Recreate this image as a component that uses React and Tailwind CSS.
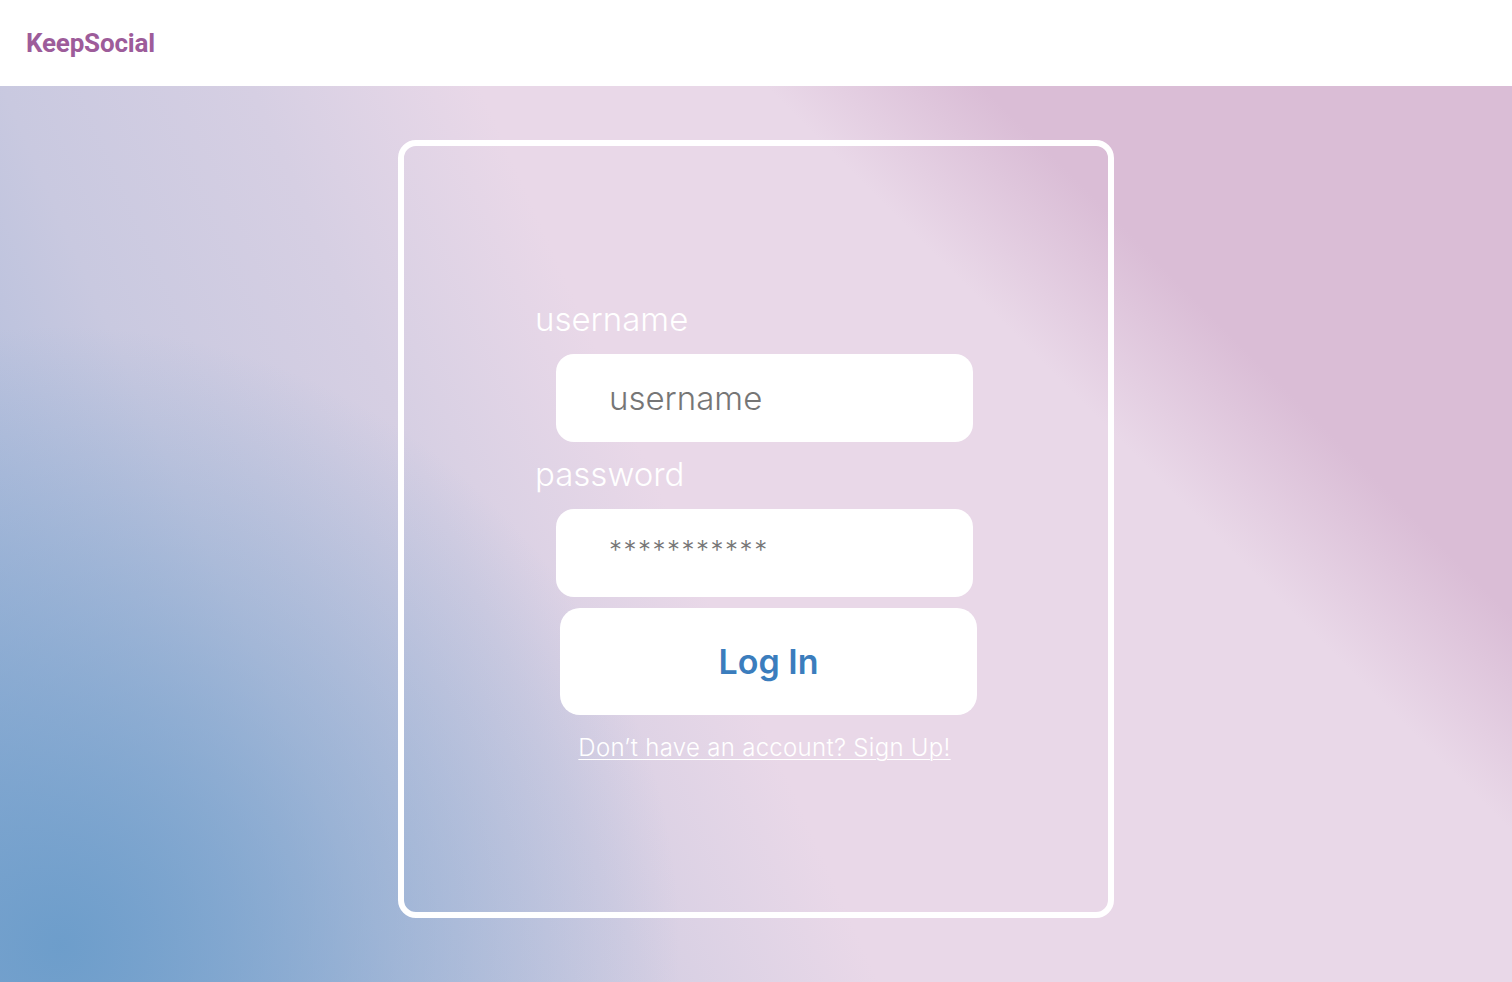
import { useState } from 'react';

function Header() {
  return (
    <header className="h-[86px] bg-white flex items-center pl-[26px]">
      <span className="font-['Roboto',sans-serif] font-bold text-[26px] text-[#9d5c9a] leading-none tracking-[-0.2px]">
        KeepSocial
      </span>
    </header>
  );
}

function LoginCard() {
  const [username, setUsername] = useState('');
  const [password, setPassword] = useState('');

  return (
    <div className="w-[716px] h-[778px] border-[6px] border-white rounded-[18px] flex items-center justify-center">
      <form className="w-[442px] flex flex-col mt-[7px]" onSubmit={e => e.preventDefault()}>
        <label className="text-white text-[33px] font-light leading-[40px] h-[40px]">username</label>
        <input
          value={username}
          onChange={e => setUsername(e.target.value)}
          placeholder="username"
          className="mt-[15px] ml-[21px] w-[417px] h-[88px] rounded-[18px] bg-white pl-[53px] text-[33px] font-light text-[#555] placeholder:text-[#767676] outline-none"
        />
        <label className="mt-[12px] text-white text-[33px] font-light leading-[40px] h-[40px]">password</label>
        <input
          type="password"
          value={password}
          onChange={e => setPassword(e.target.value)}
          placeholder="***********"
          className="mt-[15px] ml-[21px] w-[417px] h-[88px] rounded-[18px] bg-white pl-[53px] pb-[8px] text-[26px] tracking-[1.5px] font-light text-[#555] placeholder:text-[#767676] outline-none"
        />
        <button
          type="submit"
          className="mt-[11px] ml-[25px] w-[417px] h-[107px] rounded-[20px] bg-white text-[#3b7dbd] text-[34px] font-semibold"
        >
          Log In
        </button>
        <div className="ml-[21px] w-[417px] mt-[15px] text-center">
          <a href="#" className="text-white text-[24px] tracking-[0.3px] font-light underline underline-offset-[3px] decoration-1">
            Don’t have an account? Sign Up!
          </a>
        </div>
      </form>
    </div>
  );
}

export default function App() {
  return (
    <div className="min-h-screen font-['Inter',sans-serif] flex flex-col">
      <Header />
      <main
        className="h-[896px] flex justify-center pt-[54px] bg-[linear-gradient(45deg,rgba(218,190,214,0)_0%,rgba(218,190,214,0)_69%,#dabdd6_78%,#dabdd6_100%),radial-gradient(circle_620px_at_60px_860px,rgba(106,156,202,0.95)_0%,rgba(106,156,202,0)_100%),linear-gradient(66deg,#9fb4d8_0%,#c9c9e0_21%,#d6cfe3_34%,#e9d8e8_46%,#e9d8e8_100%)]"
      >
        <LoginCard />
      </main>
    </div>
  );
}
